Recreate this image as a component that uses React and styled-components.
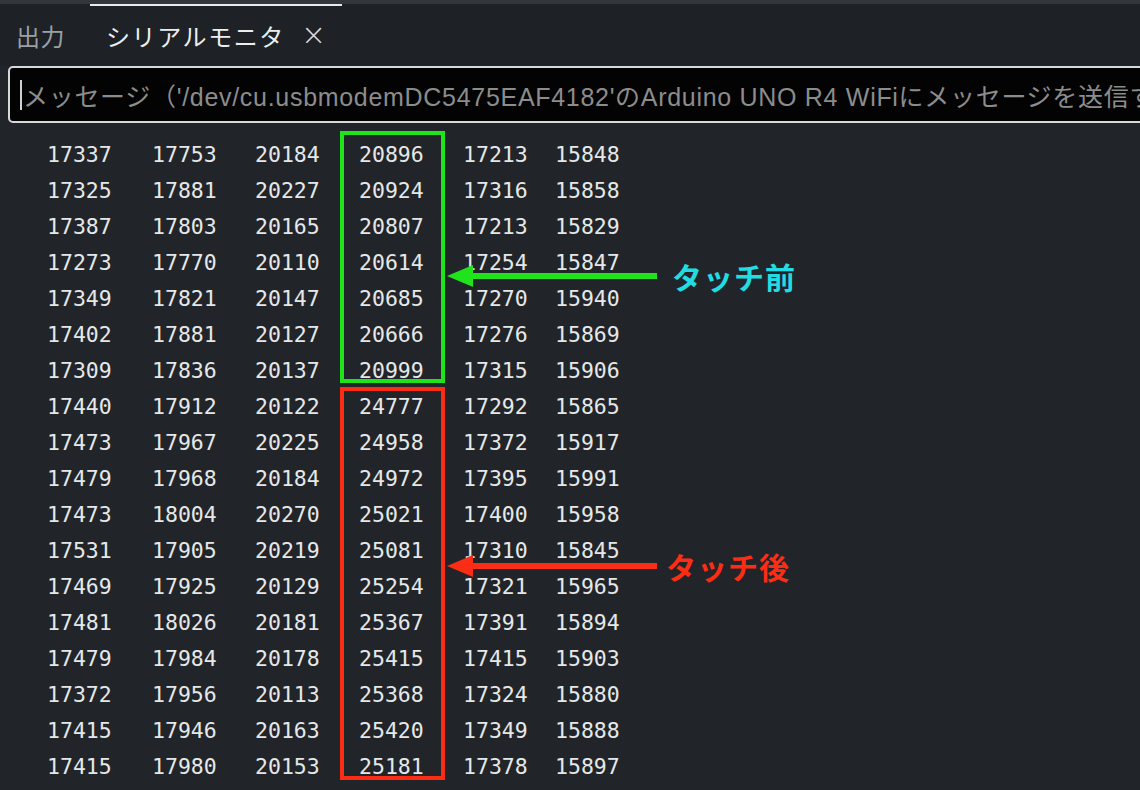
import React from "react";
import styled, { createGlobalStyle } from "styled-components";

const Global = createGlobalStyle`
  html, body { margin: 0; padding: 0; background: #212529; overflow: hidden; }
  #root { width: 1140px; height: 790px; }
`;

const Page = styled.div`
  width: 1140px;
  height: 790px;
  background: #212529;
  display: flex;
  flex-direction: column;
  overflow: hidden;
  font-family: "Liberation Sans", "Noto Sans CJK JP", sans-serif;
`;

const TopStrip = styled.div`
  height: 4px;
  background: #33373b;
  position: relative;
`;

const ActiveLine = styled.div`
  position: absolute;
  left: 90px;
  top: 4px;
  width: 252px;
  height: 2px;
  background: #e8ecec;
`;

const TabBar = styled.div`
  height: 62px;
  display: flex;
  align-items: center;
  padding-left: 16px;
  gap: 41px;
  background: #1e2226;
`;

const Tab = styled.div`
  font-family: "Noto Sans CJK JP", sans-serif;
  font-size: 24px;
  color: ${(p) => (p.$active ? "#eceeee" : "#9aa0a4")};
  display: flex;
  align-items: center;
  gap: 16px;
  letter-spacing: ${(p) => (p.$active ? "1.6px" : "0.5px")};
`;

const Close = styled.span`
  font-family: "DejaVu Sans", sans-serif;
  font-size: 30px;
  line-height: 1;
  color: #d8dcdc;
  font-weight: 300;
  letter-spacing: 0;
`;

const InputWrap = styled.div`
  margin-left: 8px;
  width: 1160px;
  height: 53px;
  border: 2px solid #d4dada;
  border-radius: 5px;
  background: #030303;
  display: flex;
  align-items: center;
  padding-left: 10px;
  overflow: hidden;
  flex-shrink: 0;
`;

const Caret = styled.div`
  width: 2px;
  height: 30px;
  background: #d0d0d0;
  margin-right: 1px;
  flex-shrink: 0;
`;

const Placeholder = styled.div`
  font-family: "Liberation Sans", "Noto Sans CJK JP", sans-serif;
  font-size: 25px;
  letter-spacing: 0.7px;
  color: #8c8c8c;
  white-space: nowrap;
`;

const Data = styled.div`
  position: relative;
  flex: 1;
  padding-top: 13px;
  background: #212529;
`;

const Row = styled.div`
  display: grid;
  grid-template-columns: 105px 103px 104px 104px 92px auto;
  padding-left: 47px;
  height: 36px;
  align-items: center;
  font-family: "DejaVu Sans Mono", monospace;
  font-size: 21.5px;
  color: #e6e8e8;
`;

const Box = styled.div`
  position: absolute;
  left: 340px;
  width: 97px;
  border: 4px solid ${(p) => p.$color};
`;

const Arrow = styled.svg`
  position: absolute;
  left: 445px;
  width: 215px;
  height: 30px;
`;

const Label = styled.div`
  position: absolute;
  font-family: "Noto Sans CJK JP", sans-serif;
  font-weight: 700;
  font-size: 30px;
  letter-spacing: 1px;
  color: ${(p) => p.$color};
`;

const rows = [
  [17337, 17753, 20184, 20896, 17213, 15848],
  [17325, 17881, 20227, 20924, 17316, 15858],
  [17387, 17803, 20165, 20807, 17213, 15829],
  [17273, 17770, 20110, 20614, 17254, 15847],
  [17349, 17821, 20147, 20685, 17270, 15940],
  [17402, 17881, 20127, 20666, 17276, 15869],
  [17309, 17836, 20137, 20999, 17315, 15906],
  [17440, 17912, 20122, 24777, 17292, 15865],
  [17473, 17967, 20225, 24958, 17372, 15917],
  [17479, 17968, 20184, 24972, 17395, 15991],
  [17473, 18004, 20270, 25021, 17400, 15958],
  [17531, 17905, 20219, 25081, 17310, 15845],
  [17469, 17925, 20129, 25254, 17321, 15965],
  [17481, 18026, 20181, 25367, 17391, 15894],
  [17479, 17984, 20178, 25415, 17415, 15903],
  [17372, 17956, 20113, 25368, 17324, 15880],
  [17415, 17946, 20163, 25420, 17349, 15888],
  [17415, 17980, 20153, 25181, 17378, 15897],
];

const GREEN = "#1fe41c";
const RED = "#fb2d14";

function ArrowIcon({ color, top }) {
  return (
    <Arrow style={{ top }} viewBox="0 0 215 30">
      <polygon points="2,15 28,4 28,26" fill={color} />
      <rect x="26" y="12" width="186" height="6" fill={color} />
    </Arrow>
  );
}

export default function App() {
  return (
    <Page>
      <Global />
      <TopStrip>
        <ActiveLine />
      </TopStrip>
      <TabBar>
        <Tab>出力</Tab>
        <Tab $active>
          シリアルモニタ<Close>×</Close>
        </Tab>
      </TabBar>
      <InputWrap>
        <Caret />
        <Placeholder>
          メッセージ（'/dev/cu.usbmodemDC5475EAF4182'のArduino UNO R4 WiFiにメッセージを送信す
        </Placeholder>
      </InputWrap>
      <Data>
        {rows.map((r, i) => (
          <Row key={i}>
            {r.map((v, j) => (
              <span key={j}>{v}</span>
            ))}
          </Row>
        ))}
        <Box $color={GREEN} style={{ top: 8, height: 244 }} />
        <Box $color={RED} style={{ top: 264, height: 385 }} />
        <ArrowIcon color={GREEN} top={138} />
        <Label $color="#22dce4" style={{ left: 672, top: 131 }}>タッチ前</Label>
        <ArrowIcon color={RED} top={428} />
        <Label $color={RED} style={{ left: 666, top: 421 }}>タッチ後</Label>
      </Data>
    </Page>
  );
}
